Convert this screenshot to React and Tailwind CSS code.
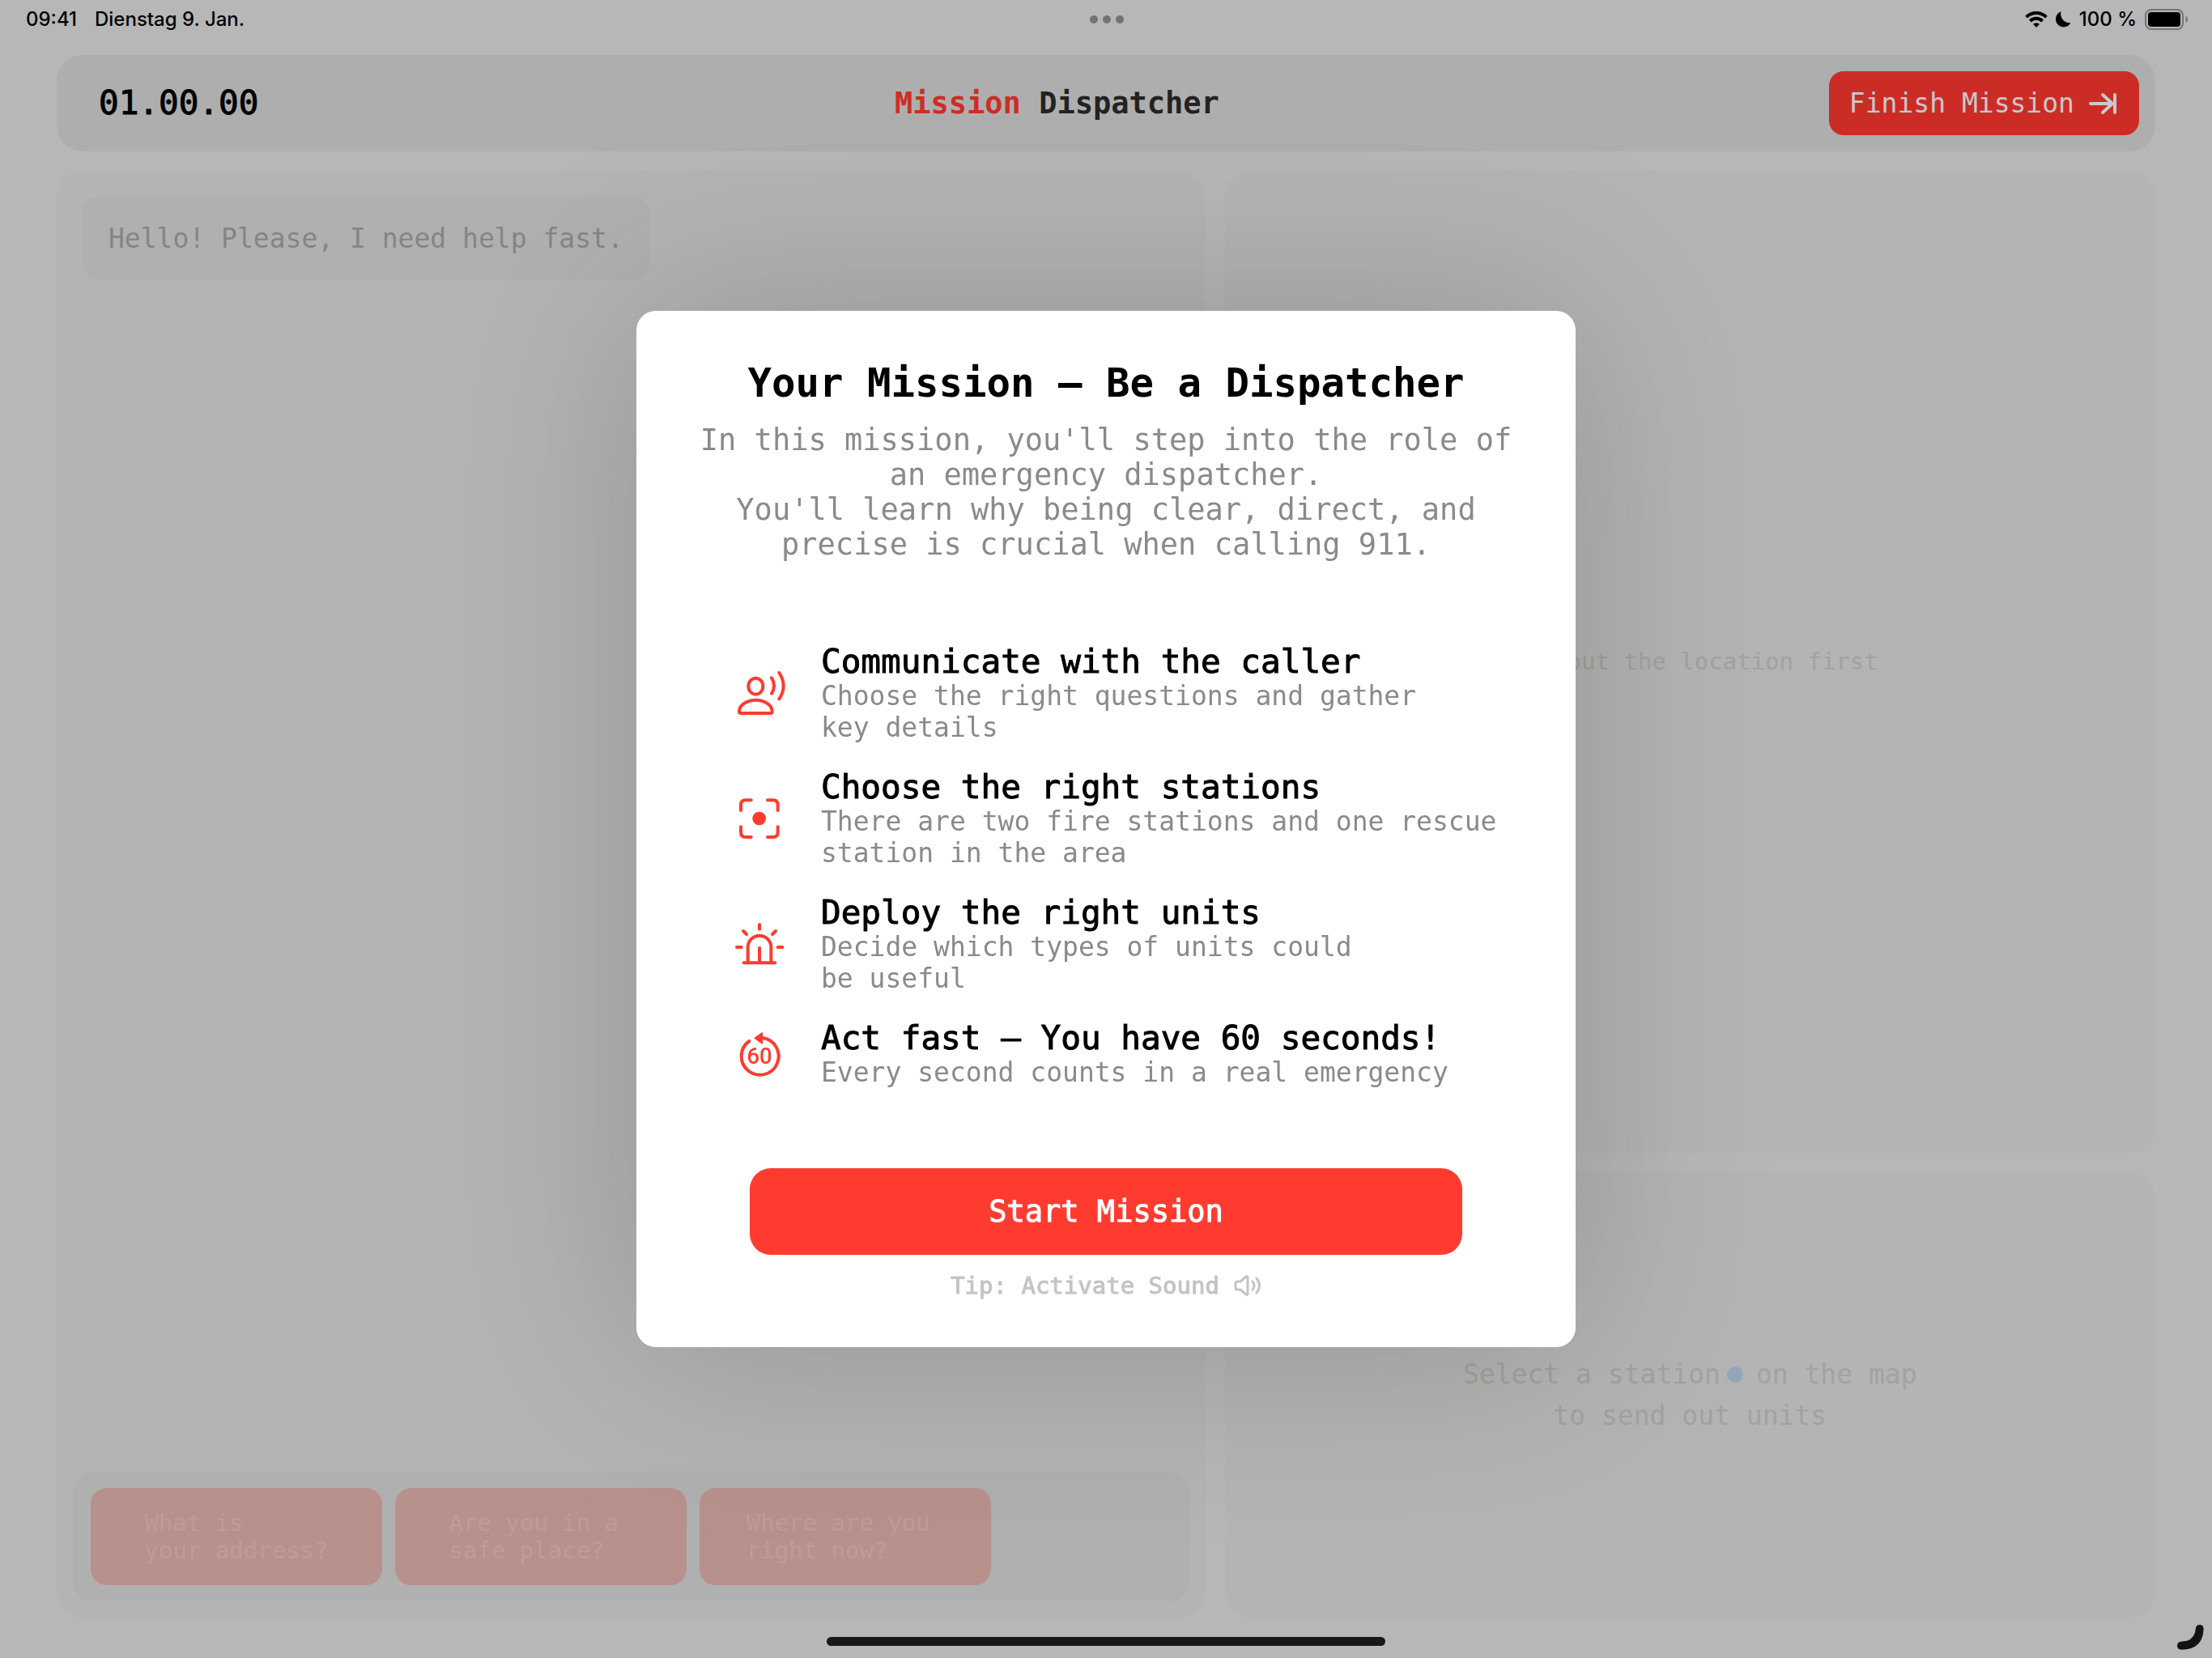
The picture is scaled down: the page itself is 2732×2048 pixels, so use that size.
import React from "react";

const MONO = "font-['DejaVu_Sans_Mono',monospace]";

// Medium weight for a family that only ships regular and bold.
const MEDIUM = "[-webkit-text-stroke:1px_currentColor]";

function WifiIcon() {
  return (
    <svg viewBox="0 0 28 20" className="h-5 w-7" aria-hidden="true">
      <g fill="none" stroke="#000" strokeWidth="4">
        <path d="M1.6 7.2a17.6 17.6 0 0 1 24.8 0" />
        <path d="M6.4 12a10.8 10.8 0 0 1 15.2 0" />
      </g>
      <path d="M14 20l-4-4.2a5.8 5.8 0 0 1 8 0z" />
    </svg>
  );
}

function MoonIcon() {
  return (
    <svg viewBox="0 0 19 20" className="h-5 w-[19px]" aria-hidden="true">
      <path d="M6.6.3A11 11 0 0 0 18.4 14.2 9.8 9.8 0 1 1 6.6.3z" />
    </svg>
  );
}

function BatteryIcon() {
  return (
    <svg viewBox="0 0 54 26" className="h-[26px] w-[54px]" aria-hidden="true">
      <rect x="1" y="1" width="46" height="24" rx="7" fill="none" stroke="#757575" strokeWidth="2" />
      <rect x="4" y="4" width="40" height="18" rx="4" />
      <path d="M50.5 9c1.7.6 2.6 2.200 2.600 4s-.9 3.400-2.600 4z" fill="#757575" />
    </svg>
  );
}

function ArrowToLineIcon() {
  return (
    <svg viewBox="0 0 34 28" className="h-7 w-[34px]" fill="none" stroke="currentColor" strokeWidth="4" strokeLinecap="round" strokeLinejoin="round" aria-hidden="true">
      <path d="M2 14h27M17 3L29 14 17 25M32 3v22" />
    </svg>
  );
}

function SpeakerIcon() {
  return (
    <svg viewBox="0 0 34 28" className="h-7 w-[34px]" fill="none" stroke="currentColor" strokeWidth="3" strokeLinecap="round" strokeLinejoin="round" aria-hidden="true">
      <path d="M2 11Q2 9 4 9H8L15 3Q17 2 17 4V24Q17 26 15 25L8 19H4Q2 19 2 17Z" />
      <path d="M23 9Q27 14 23 19M28 5Q35 14 28 23" />
    </svg>
  );
}

const featureIcon = {
  viewBox: "0 0 192 192",
  className: "size-16 shrink-0",
  fill: "none",
  stroke: "#ff3b30",
  strokeWidth: 12,
  strokeLinecap: "round",
  strokeLinejoin: "round",
  "aria-hidden": true,
};

function PersonWaveIcon() {
  return (
    <svg {...featureIcon}>
      <ellipse cx="82" cy="71" rx="27" ry="30" />
      <path d="M28 171H136Q143 171 143 164C143 142 115 122 82 122S21 142 21 164Q21 171 28 171Z" />
      <path d="M141 40Q159 70 141 98M169 21Q201 70 169 118" />
    </svg>
  );
}

function TargetIcon() {
  return (
    <svg {...featureIcon}>
      <path d="M27 66V46Q27 28 45 28H65M126 28H146Q164 28 164 46V66M164 127V147Q164 165 146 165H126M65 165H45Q27 165 27 147V127" />
      <circle cx="95" cy="96" r="25" fill="#ff3b30" stroke="none" />
    </svg>
  );
}

function SirenIcon() {
  return (
    <svg {...featureIcon}>
      <path d="M53 166V108a43 43 0 0 1 86 0V166M38 166H154M96 111V166" />
      <path d="M96 24V41M36 48L48 60M156 48L144 60M12 108H29M164 108H181" />
    </svg>
  );
}

function SixtyIcon() {
  return (
    <svg {...featureIcon}>
      <path d="M108 36A69 69 0 1 1 58 48" />
      <path d="M79 37L106 18V56Z" fill="#ff3b30" strokeWidth="5" />
      <text x="96" y="133" textAnchor="middle" fill="#ff3b30" stroke="none" className="font-['Roboto',sans-serif] text-[82px] font-medium">
        60
      </text>
    </svg>
  );
}

const features = [
  { Icon: PersonWaveIcon, title: "Communicate with the caller", lines: ["Choose the right questions and gather", "key details"] },
  { Icon: TargetIcon, title: "Choose the right stations", lines: ["There are two fire stations and one rescue", "station in the area"] },
  { Icon: SirenIcon, title: "Deploy the right units", lines: ["Decide which types of units could", "be useful"] },
  { Icon: SixtyIcon, title: "Act fast — You have 60 seconds!", lines: ["Every second counts in a real emergency"] },
];

const questions = ["What is\nyour address?", "Are you in a \nsafe place?", "Where are you \nright now?"];

function StatusBar() {
  return (
    <div className="grid h-12 grid-cols-3 items-center pr-[29px] pl-8 font-['Inter',sans-serif] text-[24px] font-medium">
      <div className="flex gap-[22px]">
        <span>09:41</span>
        <span>Dienstag 9. Jan.</span>
      </div>
      <div className="flex justify-center gap-1.5">
        <span className="size-2.5 rounded-full bg-[#737370]" />
        <span className="size-2.5 rounded-full bg-[#737370]" />
        <span className="size-2.5 rounded-full bg-[#737370]" />
      </div>
      <div className="flex items-center justify-end gap-2.5">
        <WifiIcon />
        <MoonIcon />
        <span>100 %</span>
        <BatteryIcon />
      </div>
    </div>
  );
}

function Header() {
  return (
    <header className="mt-5 flex h-[119px] items-center justify-between rounded-[32px] bg-[#aeaeae] pr-5 pl-[52px]">
      <time className={`w-[230px] text-[41px] ${MEDIUM}`}>01.00.00</time>
      <h1 className="text-[37px] font-bold text-[#222]">
        <span className="text-[#cb2d26]">Mission</span> Dispatcher
      </h1>
      <button className={`flex h-[79px] items-center gap-[18px] rounded-[18px] bg-[#cb2d26] pr-7 pl-[25px] text-[33px] text-[#c9c9cb]`}>
        Finish Mission
        <ArrowToLineIcon />
      </button>
    </header>
  );
}

function ChatPanel() {
  return (
    <section className="row-span-2 flex flex-col justify-between rounded-[32px] bg-[#b4b4b4] p-5">
      <p className="mt-3 ml-3 flex h-[103px] items-center self-start rounded-[20px] bg-[#b0b0b0] px-8 text-[33px] text-[#858585]">
        Hello! Please, I need help fast.
      </p>
      <div className="flex gap-4 rounded-[24px] bg-[#b0b0b0] py-5 pr-5 pl-[22px]">
        {questions.map((q) => (
          <button key={q} className="flex h-[120px] w-[360px] items-center justify-center rounded-[20px] bg-[#b8918d] text-left text-[29px] leading-[34px] whitespace-pre text-[#be9c99]">
            {q}
          </button>
        ))}
      </div>
    </section>
  );
}

function MissionDialog() {
  return (
    <div className="fixed inset-0 grid place-items-center">
      <div role="dialog" aria-labelledby="mission-title" className="w-[1160px] max-w-full rounded-[24px] bg-white pt-[60px] pb-14 shadow-[0_0_240px_rgba(16,44,0,0.22)]">
        <h2 id="mission-title" className="text-center text-[49px] leading-[60px] font-bold">
          Your Mission – Be a Dispatcher
        </h2>
        <p className="mt-[18px] text-center text-[37px] leading-[43px] text-[#8a8a8e]">
          In this mission, you'll step into the role of
          <br />
          an emergency dispatcher.
          <br />
          You'll learn why being clear, direct, and
          <br />
          precise is crucial when calling 911.
        </p>
        <ul className="mt-[100px] flex flex-col gap-[31px] pl-[120px]">
          {features.map(({ Icon, title, lines }) => (
            <li key={title} className="flex items-center gap-11">
              <Icon />
              <div>
                <h3 className={`text-[41px] leading-[46px] ${MEDIUM}`}>{title}</h3>
                <p className="text-[33px] leading-[39px] text-[#8a8a8e]">
                  {lines.map((line) => (
                    <span key={line} className="block">
                      {line}
                    </span>
                  ))}
                </p>
              </div>
            </li>
          ))}
        </ul>
        <div className="mt-[99px] px-[140px]">
          <button className={`h-[107px] w-full rounded-[26px] bg-[#ff3b30] text-[37px] text-white ${MEDIUM}`}>Start Mission</button>
        </div>
        <p className={`mt-[18px] flex items-center justify-center gap-[18px] text-[29px] leading-[40px] text-[#c4c4c6] ${MEDIUM}`}>
          Tip: Activate Sound
          <SpeakerIcon />
        </p>
      </div>
    </div>
  );
}

export default function App() {
  return (
    <div className={`relative flex min-h-screen flex-col bg-[#b7b7b7] text-black ${MONO}`}>
      <StatusBar />
      <div className="flex flex-1 flex-col px-[70px]">
        <Header />
        <main className="mt-6 grid flex-1 grid-cols-[1418fr_1149fr] grid-rows-[1213fr_550fr] gap-6">
          <ChatPanel />
          <section className="flex items-center justify-center rounded-[32px] bg-[#b4b4b4] pr-6 text-[29px] text-[#a2a2a2]">
            Ask about the location first
          </section>
          <section className="flex flex-col items-center justify-center rounded-[32px] bg-[#b4b4b4] text-[33px] leading-[51px] text-[#a2a2a2]">
            <p className="flex items-center">
              Select a station
              <span className="mr-4 ml-2 size-5 rounded-full bg-[#93a6ba]" />
              on the map
            </p>
            <p>to send out units</p>
          </section>
        </main>
      </div>
      <footer className="flex h-[50px] items-end justify-center pb-[15px]">
        <div className="h-[11px] w-[690px] rounded-full bg-[#181818]" />
      </footer>
      <svg viewBox="0 0 100 94" className="absolute right-2.5 bottom-2.5 h-[31px] w-[33px]" aria-hidden="true">
        <path d="M14 63L37 60Q66 50 69 16Q70 0 84 0Q99 0 99 16Q95 93 18 93Q0 93 0 78Q0 64 14 63Z" fill="#131313" />
      </svg>
      <MissionDialog />
    </div>
  );
}
